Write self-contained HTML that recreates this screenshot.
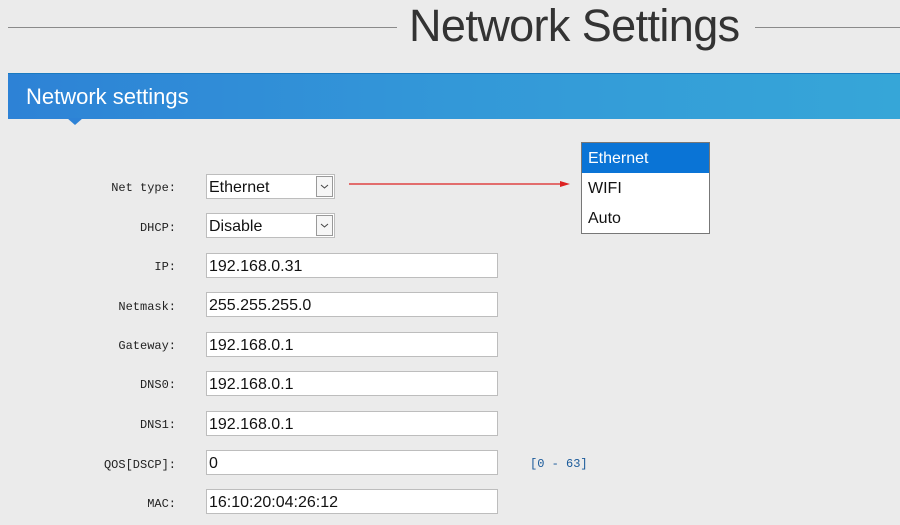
<!DOCTYPE html>
<html><head><style>
body{margin:0;width:900px;height:525px;overflow:hidden;background:#ebebeb;font-family:"Liberation Sans",sans-serif;position:relative}
.line{position:absolute;top:27px;height:1px;background:#8a8a8a}
.title{position:absolute;left:409px;top:0px;font-size:45px;color:#333;font-weight:normal;letter-spacing:-0.6px}
.panel{position:absolute;left:8px;top:73px;width:892px;height:452px;background:#ebebeb}
.banner{position:absolute;left:8px;top:73px;width:892px;height:45px;background:linear-gradient(90deg,#2d82d6,#3398d8 50%,#36a6d8);border-top:1px solid #1a7ac0}
.banner span{position:absolute;left:18px;top:10px;color:#fff;font-size:22px}
.notch{position:absolute;left:67px;top:118px;width:0;height:0;border-left:8px solid transparent;border-right:8px solid transparent;border-top:7px solid #2d82d6}
.lbl{position:absolute;width:176px;left:0;text-align:right;font-family:"Liberation Mono",monospace;font-size:12px;color:#222}
.inp{position:absolute;left:206px;background:#fff;border:1px solid #bdbdbd;font-size:16px;color:#111;line-height:25px;padding-left:2px;box-sizing:border-box;width:292px;height:25px}
.sel{width:129px}
.dd{position:absolute;right:1px;top:1px;width:17px;height:21px;border:1px solid #999;box-sizing:border-box;background:#f6f6f6}
.menu{position:absolute;left:581px;top:142px;width:127px;height:90px;background:#fff;border:1px solid #777;font-size:16px}
.menu div{height:30px;line-height:32px;padding-left:6px;color:#111}
.menu .hl{background:#0a74d6;color:#fff}
</style></head><body>
<div class="line" style="left:8px;width:389px"></div>
<div class="line" style="left:755px;width:145px"></div>
<div class="title">Network Settings</div>
<div class="panel"></div>
<div class="banner"><span>Network settings</span></div>
<div class="notch"></div>

<div class="lbl" style="top:181px">Net type:</div>
<div class="inp sel" style="top:174px">Ethernet<div class="dd"><svg width="15" height="19"><path d="M4 8 L7.5 11 L11 8" fill="none" stroke="#444" stroke-width="1"/></svg></div></div>
<div class="lbl" style="top:221px">DHCP:</div>
<div class="inp sel" style="top:213px">Disable<div class="dd"><svg width="15" height="19"><path d="M4 8 L7.5 11 L11 8" fill="none" stroke="#444" stroke-width="1"/></svg></div></div>
<div class="lbl" style="top:260px">IP:</div>
<div class="inp" style="top:253px">192.168.0.31</div>
<div class="lbl" style="top:300px">Netmask:</div>
<div class="inp" style="top:292px">255.255.255.0</div>
<div class="lbl" style="top:339px">Gateway:</div>
<div class="inp" style="top:332px">192.168.0.1</div>
<div class="lbl" style="top:378px">DNS0:</div>
<div class="inp" style="top:371px">192.168.0.1</div>
<div class="lbl" style="top:418px">DNS1:</div>
<div class="inp" style="top:411px">192.168.0.1</div>
<div class="lbl" style="top:458px">QOS[DSCP]:</div>
<div class="inp" style="top:450px">0</div>
<div style="position:absolute;left:530px;top:457px;font-family:'Liberation Mono',monospace;font-size:12px;color:#1a5a9a">[0 - 63]</div>
<div class="lbl" style="top:497px">MAC:</div>
<div class="inp" style="top:489px">16:10:20:04:26:12</div>

<svg style="position:absolute;left:348px;top:179px" width="225" height="10"><line x1="1" y1="5" x2="216" y2="5" stroke="#d22" stroke-width="1.2"/><polygon points="212,2 222,5 212,8" fill="#d22"/></svg>
<div class="menu"><div class="hl">Ethernet</div><div>WIFI</div><div>Auto</div></div>
</body></html>
